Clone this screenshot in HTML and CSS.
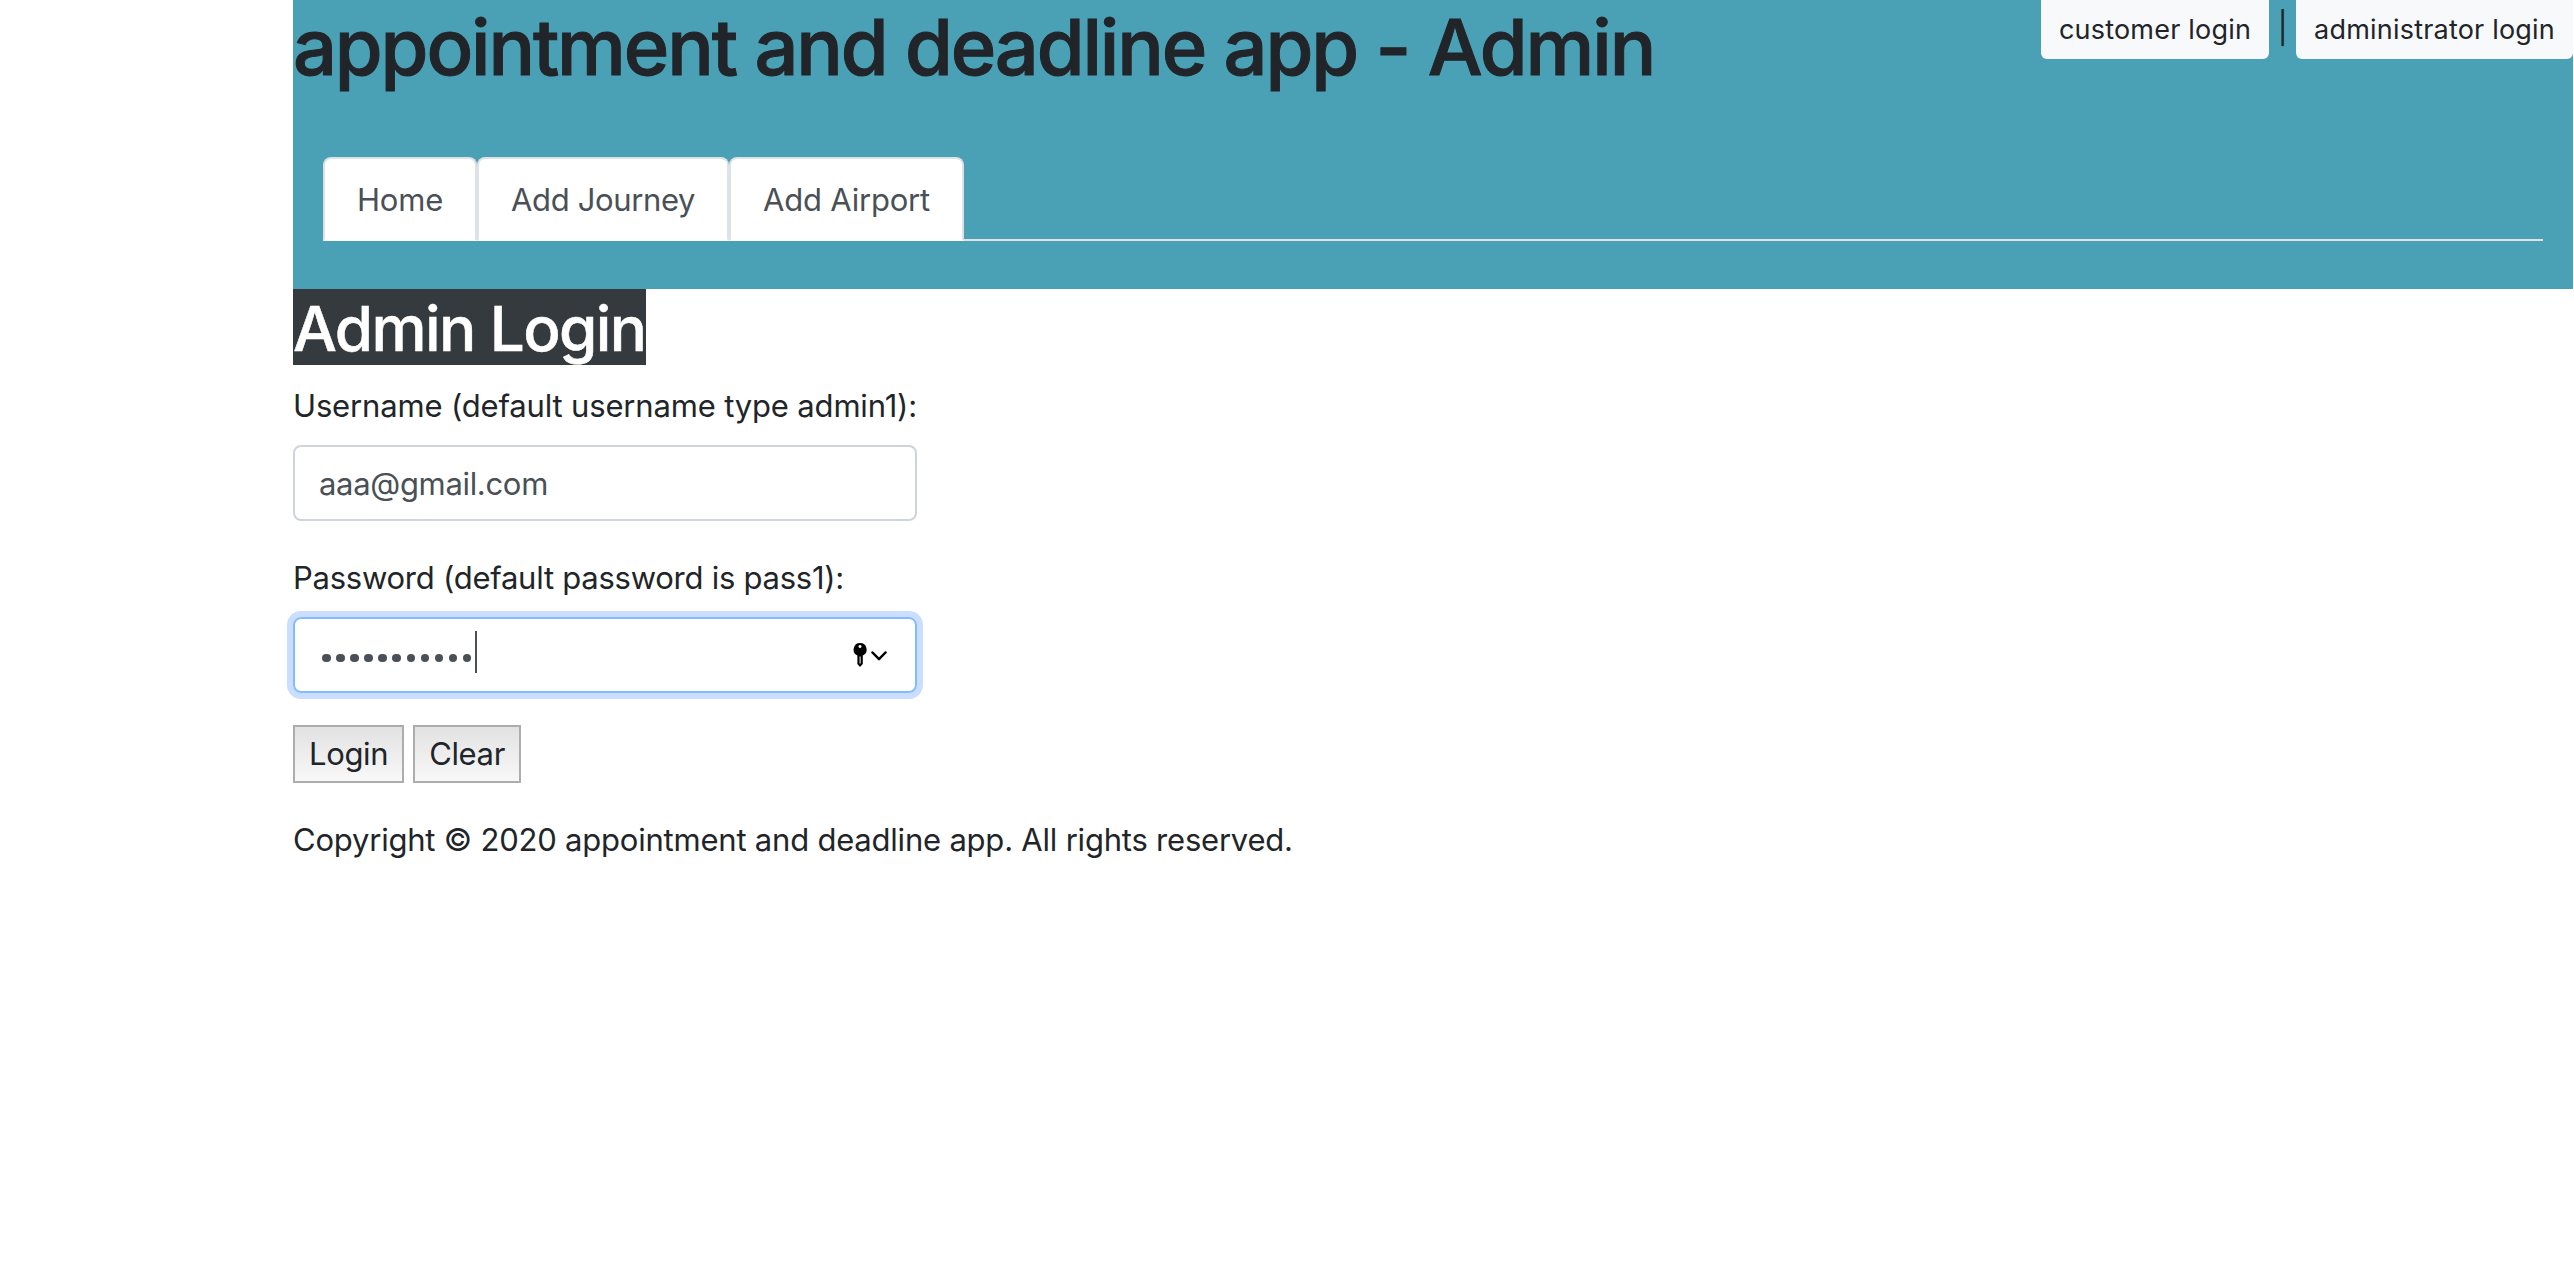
FILE: index.html
```
<!DOCTYPE html>
<html lang="en">
<head>
<meta charset="utf-8">
<title>appointment and deadline app - Admin</title>
<link rel="stylesheet" href="styles.css">
</head>
<body>
<div class="page">
  <header class="header">
    <div class="topbar">
      <h1 class="title">appointment and deadline app - Admin</h1>
      <div class="logins"><a class="login-link">customer login</a><span class="divider">|</span><a class="login-link">administrator login</a></div>
    </div>
    <nav class="tabs">
      <a class="tab">Home</a>
      <a class="tab journey">Add Journey</a>
      <a class="tab">Add Airport</a>
    </nav>
  </header>
  <main>
    <h2 class="heading">Admin Login</h2>
    <form class="form">
      <label class="label">Username (default username type admin1):</label>
      <div class="field">aaa@gmail.com</div>
      <label class="label label-password">Password (default password is pass1):</label>
      <div class="field field-focus">
        <span class="dots"><i></i><i></i><i></i><i></i><i></i><i></i><i></i><i></i><i></i><i></i><i></i></span><span class="caret"></span>
        <svg class="key" width="34" height="24" viewBox="0 0 34 24"><path fill="#000" fill-rule="evenodd" d="M7 0a6.500 6.500 0 0 1 2.800 12.400V21L7 24l-2.600-3V12.400A6.500 6.500 0 0 1 7 0zM7 2a1.500 1.500 0 1 0 .01 0zM6.600 13.500h1v7h-1z"/><path fill="none" stroke="#000" stroke-width="2.500" stroke-linecap="round" stroke-linejoin="round" d="M19.500 9.500l6.500 6.700 6.500-6.700"/></svg>
      </div>
      <div class="actions"><button type="button" class="button">Login</button><button type="button" class="button">Clear</button></div>
    </form>
    <p class="footer">Copyright © 2020 appointment and deadline app. All rights reserved.</p>
  </main>
</div>
</body>
</html>
```
FILE: styles.css
```
* { box-sizing: border-box; }
body { margin: 0; background: #fff; color: #212529; font: 31px/48px Inter, "Liberation Sans", sans-serif; }
.page { margin: 0 1px 0 293px; }
.header { height: 289px; background: #4aa0b5; }
.topbar { display: flex; justify-content: space-between; align-items: flex-start; height: 157px; }
.title { margin: 0; font-size: 77.5px; line-height: 95px; font-weight: 500; letter-spacing: -2.15px; -webkit-text-stroke: 1px #212529; white-space: nowrap; }
.logins { display: flex; }
.login-link { height: 59px; padding: 0 18px; background: #f8f9fa; border-radius: 0 0 6px 6px; font-size: 27px; line-height: 59px; letter-spacing: 0.2px; }
.divider { width: 27px; text-align: center; line-height: 55px; }
.tabs { display: flex; margin: 0 30px; height: 84px; border-bottom: 2px solid #dee2e6; }
.tab { height: 84px; padding: 0 32px; background: #fff; border: 2px solid #dee2e6; border-bottom-color: #fff; border-radius: 8px 8px 0 0; color: #495057; line-height: 82px; letter-spacing: -0.2px; }
.journey { letter-spacing: -0.37px; }
.heading { margin: 0; width: 353px; height: 76px; background: #343a3e; color: #fff; font-size: 62px; line-height: 79px; font-weight: 500; letter-spacing: -1.6px; -webkit-text-stroke: 0.5px #fff; white-space: nowrap; }
.form { margin-top: 16px; width: 624px; }
.label { display: block; height: 48px; margin-bottom: 16px; line-height: 50px; letter-spacing: -0.16px; white-space: nowrap; }
.label-password { letter-spacing: -0.25px; }
.field { display: flex; align-items: center; height: 76px; margin-bottom: 32px; padding: 2px 24px 0; border: 2px solid #ced4da; border-radius: 8px; color: #495057; letter-spacing: -0.32px; }
.field-focus { padding-top: 0; border-color: #80bdff; box-shadow: 0 0 0 6px #cbdeff; }
.dots { display: flex; gap: 5.6px; padding: 6px 0 0 3px; }
.dots i { width: 8.5px; height: 8.5px; border-radius: 50%; background: #495057; }
.caret { width: 2px; height: 42px; margin: -6px 0 0 4px; background: #495057; }
.key { margin: 0 4px 0 auto; }
.actions { display: flex; gap: 9px; }
.button { height: 58px; padding: 0 14px; border: 2px solid #adadad; border-radius: 0; background: linear-gradient(#e2e2e2, #f8f8f8); color: #212529; font: inherit; line-height: 54px; letter-spacing: -0.36px; }
.footer { margin: 32px 0; line-height: 50px; letter-spacing: -0.21px; }
```
